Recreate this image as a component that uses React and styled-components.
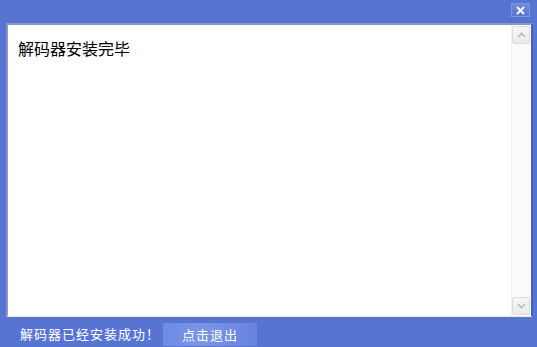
import React from "react";
import styled, { createGlobalStyle } from "styled-components";

const GlobalStyle = createGlobalStyle`
  html, body {
    margin: 0;
    padding: 0;
    background: #5874d2;
  }
  body {
    font-family: "Noto Sans CJK SC", "Noto Sans", sans-serif;
  }
`;

const Window = styled.div`
  width: 537px;
  height: 347px;
  box-sizing: border-box;
  background: #5874d2;
  display: flex;
  flex-direction: column;
  overflow: hidden;
`;

const TitleBar = styled.div`
  height: 23px;
  display: flex;
  justify-content: flex-end;
  align-items: flex-start;
  padding: 3px 7px 0 0;
  box-sizing: border-box;
`;

const CloseButton = styled.button`
  width: 19px;
  height: 14px;
  padding: 0;
  border: 1px solid #7f95dc;
  background: linear-gradient(#6f88dd, #5b75d3);
  display: flex;
  align-items: center;
  justify-content: center;
  cursor: pointer;
`;

const Panel = styled.div`
  margin: 0 4px 0 6px;
  height: 294px;
  display: flex;
  background: #fff;
  border-top: 2px solid #8a98c6;
  border-left: 2px solid #8a98c6;
  border-right: 2px solid #4660bd;
  border-bottom: 1px solid #e8e8e8;
  box-sizing: border-box;
`;

const Content = styled.div`
  flex: 1;
  padding: 13px 10px;
  font-size: 16px;
  line-height: 20px;
  color: #000;
`;

const Scrollbar = styled.div`
  width: 18px;
  display: flex;
  flex-direction: column;
  justify-content: space-between;
  padding: 1px 1px 1px 0;
  background: #fbfbfb;
  border-left: 1px solid #f0f0f0;
`;

const ArrowButton = styled.div`
  height: 16px;
  border: 1px solid #dcdcdc;
  border-radius: 2px;
  background: linear-gradient(#f6f6f6, #ebebeb);
  display: flex;
  align-items: center;
  justify-content: center;
`;

const BottomBar = styled.div`
  flex: 1;
  display: flex;
  align-items: center;
  padding: 5px 0 0 20px;
  gap: 3px;
`;

const Status = styled.span`
  color: #fff;
  font-size: 13px;
  letter-spacing: 1px;
  margin-top: -2px;
`;

const ExitButton = styled.button`
  width: 94px;
  height: 23px;
  border: none;
  padding: 0;
  color: #fff;
  font-family: inherit;
  font-size: 13px;
  letter-spacing: 1px;
  background: linear-gradient(90deg, #6e8ae2 0%, #7a95e6 40%, #6883dc 100%);
  cursor: pointer;
`;

const Chevron = ({ up }) => (
  <svg width="9" height="6" viewBox="0 0 9 6">
    <path
      d={up ? "M1 5 L4.5 1.5 L8 5" : "M1 1 L4.5 4.5 L8 1"}
      fill="none"
      stroke="#b8b8b8"
      strokeWidth="1.6"
    />
  </svg>
);

export default function App() {
  return (
    <>
      <GlobalStyle />
      <Window>
        <TitleBar>
          <CloseButton aria-label="close">
            <svg width="9" height="9" viewBox="0 0 9 9">
              <path d="M1 1 L8 8 M8 1 L1 8" stroke="#fff" strokeWidth="1.8" />
            </svg>
          </CloseButton>
        </TitleBar>
        <Panel>
          <Content>解码器安装完毕</Content>
          <Scrollbar>
            <ArrowButton>
              <Chevron up />
            </ArrowButton>
            <ArrowButton>
              <Chevron />
            </ArrowButton>
          </Scrollbar>
        </Panel>
        <BottomBar>
          <Status>解码器已经安装成功！</Status>
          <ExitButton>点击退出</ExitButton>
        </BottomBar>
      </Window>
    </>
  );
}
